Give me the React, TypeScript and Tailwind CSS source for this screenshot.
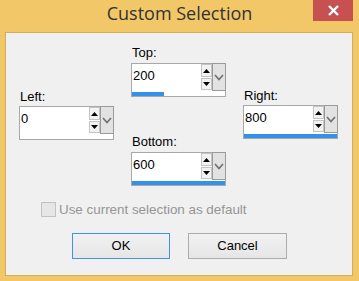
import React from "react";

function Up() {
  return (
    <svg width="7" height="4" viewBox="0 0 7 4">
      <polygon points="3.5,0 7,4 0,4" fill="#000" />
    </svg>
  );
}
function Down() {
  return (
    <svg width="7" height="4" viewBox="0 0 7 4">
      <polygon points="0,0 7,0 3.5,4" fill="#000" />
    </svg>
  );
}

function Spin({ value, pct }: { value: string; pct: number }) {
  return (
    <div className="w-[95px] h-[34px] border border-[#a8a8a8] bg-white flex flex-col">
      <div className="flex h-[27px]">
        <div className="flex-1 pl-[1px] pt-[4px] text-[13px] leading-[15px] text-black">{value}</div>
        <div className="w-[11px] flex flex-col gap-[1px] pt-0">
          <div className="h-[13px] border border-[#c4c4c4] bg-[#f2f2f2] flex items-center justify-center">
            <Up />
          </div>
          <div className="h-[12px] border border-[#c4c4c4] bg-[#f2f2f2] flex items-center justify-center">
            <Down />
          </div>
        </div>
        <div className="w-[14px] -mt-px -mr-px border border-[#9a9a9a] bg-[#e2e2e2] flex items-center justify-center">
          <svg width="10" height="7" viewBox="0 0 10 7">
            <polyline points="1,1 5,5.5 9,1" fill="none" stroke="#6f6f6f" strokeWidth="1.6" />
          </svg>
        </div>
      </div>
      <div className="flex-1 flex items-end bg-white">
        <div className="h-[4px] bg-[#3391ea]" style={{ width: `${pct}%` }} />
      </div>
    </div>
  );
}

function Label({ children }: { children: React.ReactNode }) {
  return <div className="text-[13px] leading-[15px] text-black mb-[3px] pl-[1px]">{children}</div>;
}

export default function App() {
  return (
    <div
      className="w-[359px] h-[281px] bg-[#f1c768] flex flex-col pl-[5px] pr-[6px] pb-[5px]"
      style={{ fontFamily: '"Liberation Sans", Arial, sans-serif' }}
    >
      <div className="h-[32px] grid grid-cols-[1fr_auto_1fr] -ml-[5px] -mr-[6px]">
        <div />
        <div
          className="text-[18px] leading-[26px] text-[#333333]"
          style={{ fontFamily: '"Open Sans", "Noto Sans", sans-serif' }}
        >
          Custom Selection
        </div>
        <div className="flex justify-end pr-[6px]">
          <div className="w-[40px] h-[21px] bg-[#c75050] flex items-center justify-center">
            <svg width="11" height="11" viewBox="0 0 11 11">
              <line x1="1" y1="1" x2="10" y2="10" stroke="#fff" strokeWidth="2.4" />
              <line x1="10" y1="1" x2="1" y2="10" stroke="#fff" strokeWidth="2.4" />
            </svg>
          </div>
        </div>
      </div>
      <div className="flex-1 border border-[#cfae62] bg-[#f0f0f0] flex flex-col pt-[12px] pl-[13px]">
        <div className="grid grid-cols-[95px_95px_95px] gap-x-[17px]">
          <div className="mt-[44px]">
            <div className="text-[13px] leading-[15px] text-black mb-[2px] pl-[1px]">Left:</div>
            <Spin value="0" pct={0} />
          </div>
          <div>
            <Label>Top:</Label>
            <Spin value="200" pct={34} />
            <div className="mt-[37px]">
              <Label>Bottom:</Label>
              <Spin value="600" pct={100} />
            </div>
          </div>
          <div className="mt-[43px]">
            <div className="text-[13px] leading-[15px] text-black mb-[2px] pl-[1px]">Right:</div>
            <Spin value="800" pct={100} />
          </div>
        </div>
        <div className="flex items-center mt-[16px] pl-[22px] gap-[3px]">
          <div className="w-[15px] h-[15px] border border-[#c2c2c2] bg-[#e6e6e6]" />
          <span className="text-[13.4px] leading-[15px] text-[#959595]">Use current selection as default</span>
        </div>
        <div className="flex mt-[16px] pl-[53px] gap-[18px]">
          <div className="w-[98px] h-[26px] border border-[#3c96e8] bg-gradient-to-b from-[#f1f1f1] to-[#e6e6e6] flex items-center justify-center text-[13px] text-black">
            OK
          </div>
          <div className="w-[99px] h-[26px] border border-[#acacac] bg-gradient-to-b from-[#f1f1f1] to-[#e6e6e6] flex items-center justify-center text-[13px] text-black">
            Cancel
          </div>
        </div>
      </div>
    </div>
  );
}
